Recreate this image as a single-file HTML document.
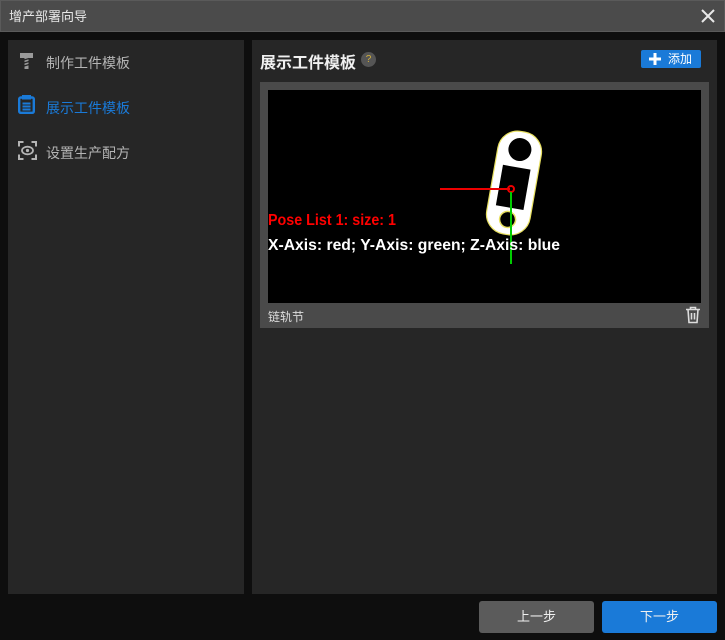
<!DOCTYPE html>
<html><head><meta charset="utf-8"><style>
*{margin:0;padding:0;box-sizing:border-box}
body{width:725px;height:640px;background:#0e0e0e;font-family:"Liberation Sans","Noto Sans CJK SC",sans-serif;position:relative;overflow:hidden}
.title{position:absolute;left:0;top:0;width:725px;height:32px;background:#4b4b4b;color:#e6e6e6;font-size:13px;line-height:32px;padding-left:8px;border:1px solid #5a5a5a}
.close{position:absolute;right:8px;top:7px}
.left{position:absolute;left:8px;top:40px;width:236px;height:554px;background:#262626}
.item{position:absolute;left:38px;font-size:14px;color:#b4b4b4}
.right{position:absolute;left:252px;top:40px;width:465px;height:554px;background:#262626}
.h{position:absolute;left:8px;top:9px;font-size:16px;font-weight:bold;color:#f0f0f0}
.q{position:absolute;left:109px;top:12px;width:15px;height:15px;border-radius:50%;background:#555;color:#d4b23a;font-size:10px;text-align:center;line-height:15px}
.add{position:absolute;left:389px;top:10px;width:60px;height:18px;background:#1a7ad8;color:#fff;font-size:12px;line-height:18px;padding-left:27px;border-radius:2px}
.card{position:absolute;left:8px;top:42px;width:449px;height:246px;background:#4a4a4a}
.img{position:absolute;left:8px;top:8px;width:433px;height:213px;background:#000;overflow:hidden}
.btn{position:absolute;top:601px;width:115px;height:32px;border-radius:3px;color:#f0f0f0;font-size:13px;text-align:center;line-height:32px}
</style></head><body>
<div class="title">增产部署向导
<svg class="close" width="16" height="16" viewBox="0 0 16 16"><path d="M2 2L14 14M14 2L2 14" stroke="#e8e8e8" stroke-width="2"/></svg></div>
<div class="left">
<svg style="position:absolute;left:11px;top:12px" width="15" height="18" viewBox="0 0 15 18"><path d="M1 1h13v5H9.5v11h-4V6H1z" fill="#9a9a9a"/><path d="M5 8l5-1.5M5 11l5-1.5M5 14l5-1.5" stroke="#262626" stroke-width="1.3"/></svg>
<div class="item" style="top:13px">制作工件模板</div>
<svg style="position:absolute;left:10px;top:55px" width="17" height="19" viewBox="0 0 17 19"><rect x="1.2" y="2.5" width="14.6" height="15.3" rx="1.5" fill="none" stroke="#1a7ad8" stroke-width="2.4"/><rect x="4" y="0" width="9" height="4.5" fill="#1a7ad8"/><path d="M4.5 8.5h8M4.5 11.5h8M4.5 14.5h8" stroke="#1a7ad8" stroke-width="2"/></svg>
<div class="item" style="top:58px;color:#1a7ad8">展示工件模板</div>
<svg style="position:absolute;left:10px;top:101px" width="19" height="19" viewBox="0 0 19 19"><path d="M1 5.5V1h4.5M13.5 1H18v4.5M18 13.5V18h-4.5M5.5 18H1v-4.5" fill="none" stroke="#b4b4b4" stroke-width="2"/><ellipse cx="9.5" cy="9.5" rx="5.5" ry="3.8" fill="none" stroke="#b4b4b4" stroke-width="1.8"/><circle cx="9.5" cy="9.5" r="1.6" fill="#b4b4b4"/></svg>
<div class="item" style="top:103px">设置生产配方</div>
</div>
<div class="right">
<div class="h">展示工件模板</div><div class="q">?</div>
<div class="add"><svg style="position:absolute;left:8px;top:3px" width="12" height="12" viewBox="0 0 12 12"><path d="M6 0v12M0 6h12" stroke="#fff" stroke-width="3"/></svg>添加</div>
<div class="card">
<div class="img">
<svg width="433" height="213" style="position:absolute;left:0;top:0">
<g transform="translate(246,93) rotate(10)">
<rect x="-22" y="-52" width="44" height="104" rx="20" fill="#fff" stroke="#e8e060" stroke-width="1.2"/>
<circle cx="0" cy="-34" r="11.5" fill="#000"/>
<rect x="-14" y="-16" width="28" height="41" fill="#000"/>
<circle cx="0" cy="37" r="8" fill="#000" stroke="#e8e060" stroke-width="1.5"/>
</g>
<line x1="172" y1="99" x2="242" y2="99" stroke="#e00" stroke-width="2"/>
<circle cx="243" cy="99" r="3" fill="none" stroke="#e00" stroke-width="2"/>
<line x1="243" y1="102" x2="243" y2="174" stroke="#0c0" stroke-width="2"/>
<text x="0" y="135" fill="#f00" font-size="16" font-weight="bold" textLength="128" lengthAdjust="spacingAndGlyphs" font-family="Liberation Sans,sans-serif">Pose List 1: size: 1</text>
<text x="0" y="160" fill="#fff" font-size="16" font-weight="bold" textLength="292" lengthAdjust="spacingAndGlyphs" font-family="Liberation Sans,sans-serif">X-Axis: red; Y-Axis: green; Z-Axis: blue</text>
</svg>
</div>
<div style="position:absolute;left:8px;top:226px;font-size:12px;color:#ddd">链轨节</div>
<svg style="position:absolute;left:425px;top:224px" width="16" height="18" viewBox="0 0 16 18"><path d="M1 3.5h14M5.5 3.5V1.5h5v2M3 3.5l1 13h8l1-13M6.5 7v6.5M9.5 7v6.5" fill="none" stroke="#ddd" stroke-width="1.6"/></svg>
</div>
</div>
<div class="btn" style="left:479px;background:#5b5b5b">上一步</div>
<div class="btn" style="left:602px;background:#1a7ad8">下一步</div>
</body></html>
